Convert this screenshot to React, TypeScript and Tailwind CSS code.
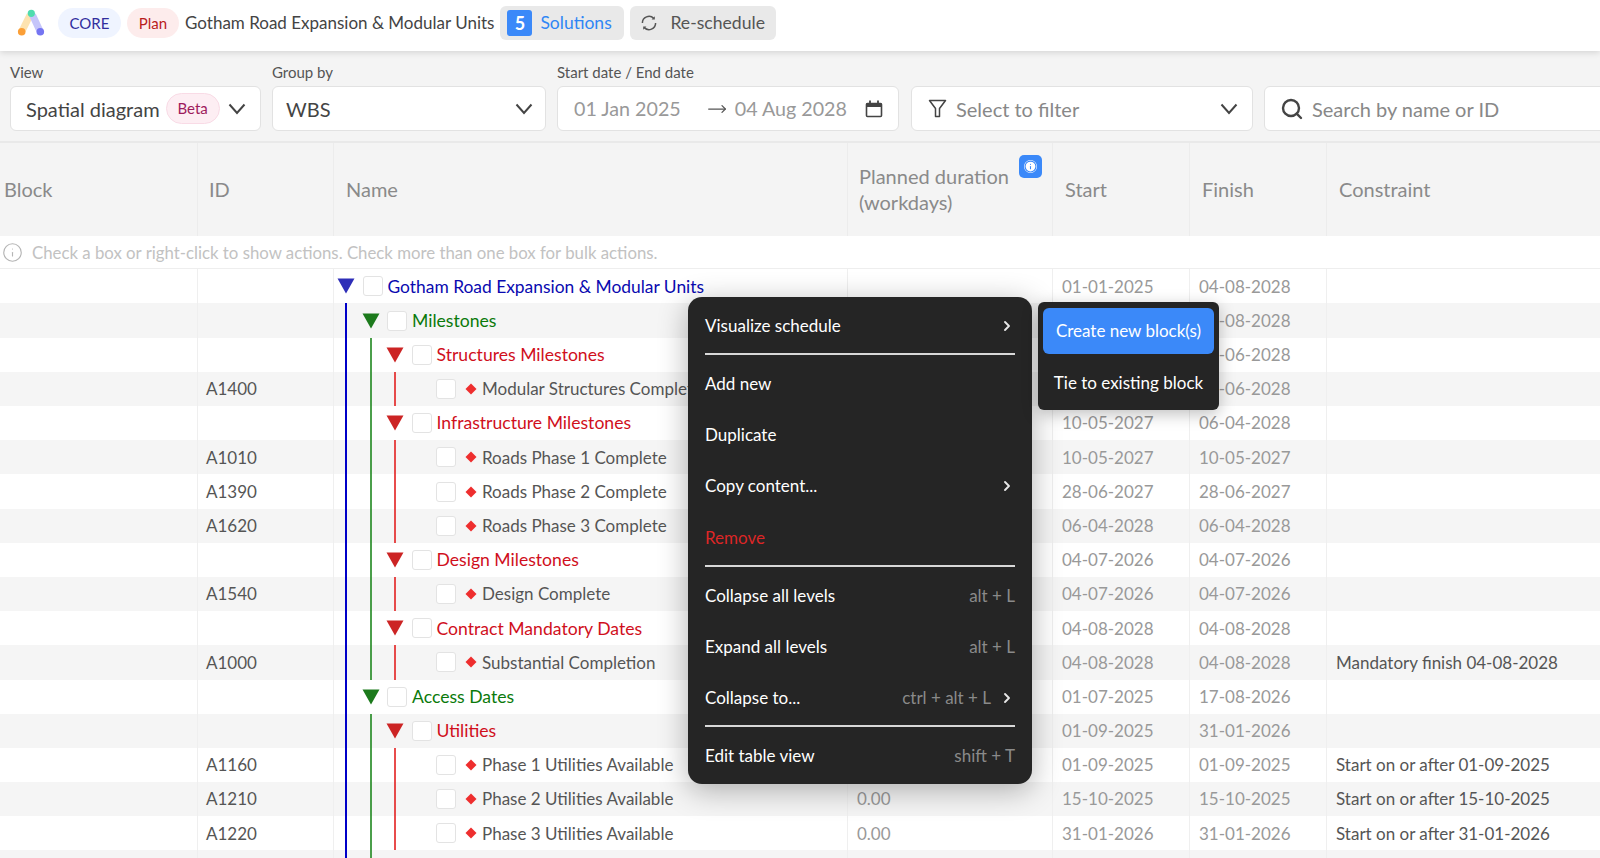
import { ChevronRight, Info, MoveRight, Search } from "lucide-react";

type Row = {
  level: number;
  name: string;
  id?: string;
  duration?: string;
  start?: string;
  finish?: string;
  constraint?: string;
};

const rows: Row[] = [
  { level: 0, name: "Gotham Road Expansion & Modular Units", start: "01-01-2025", finish: "04-08-2028" },
  { level: 1, name: "Milestones", finish: "04-08-2028" },
  { level: 2, name: "Structures Milestones", finish: "04-06-2028" },
  { level: 3, name: "Modular Structures Complete", id: "A1400", finish: "04-06-2028" },
  { level: 2, name: "Infrastructure Milestones", start: "10-05-2027", finish: "06-04-2028" },
  { level: 3, name: "Roads Phase 1 Complete", id: "A1010", start: "10-05-2027", finish: "10-05-2027" },
  { level: 3, name: "Roads Phase 2 Complete", id: "A1390", start: "28-06-2027", finish: "28-06-2027" },
  { level: 3, name: "Roads Phase 3 Complete", id: "A1620", start: "06-04-2028", finish: "06-04-2028" },
  { level: 2, name: "Design Milestones", start: "04-07-2026", finish: "04-07-2026" },
  { level: 3, name: "Design Complete", id: "A1540", start: "04-07-2026", finish: "04-07-2026" },
  { level: 2, name: "Contract Mandatory Dates", start: "04-08-2028", finish: "04-08-2028" },
  { level: 3, name: "Substantial Completion", id: "A1000", start: "04-08-2028", finish: "04-08-2028", constraint: "Mandatory finish 04-08-2028" },
  { level: 1, name: "Access Dates", start: "01-07-2025", finish: "17-08-2026" },
  { level: 2, name: "Utilities", start: "01-09-2025", finish: "31-01-2026" },
  { level: 3, name: "Phase 1 Utilities Available", id: "A1160", start: "01-09-2025", finish: "01-09-2025", constraint: "Start on or after 01-09-2025" },
  { level: 3, name: "Phase 2 Utilities Available", id: "A1210", duration: "0.00", start: "15-10-2025", finish: "15-10-2025", constraint: "Start on or after 15-10-2025" },
  { level: 3, name: "Phase 3 Utilities Available", id: "A1220", duration: "0.00", start: "31-01-2026", finish: "31-01-2026", constraint: "Start on or after 31-01-2026" },
  { level: 2, name: "" },
];

const guideColors = ["bg-[#0000c8]", "bg-[#0f7f0f]/75", "bg-[#e01010]/75"];
const triangleColors = ["text-[#2e2eb8]", "text-[#1c7a1c]", "text-[#cc2424]"];
const nameColors = [
  "text-[#0a0ab0] text-[17.4px] pt-px",
  "text-[#0b7a0b] text-[17.6px] pt-px",
  "text-[#d00f1c] text-[17.6px] pt-px",
  "text-[#555555]",
];

function Checkbox() {
  return <div className="w-5 h-5 shrink-0 ml-1 bg-white border border-[#e3e3e3] rounded-[3px]"></div>;
}

function Chevron({ className }: { className: string }) {
  return (
    <svg width="18" height="12" viewBox="0 0 18 12" fill="none" className={`shrink-0 ${className}`}>
      <path d="M1.5 1.5L9 10L16.5 1.5" stroke="#444444" strokeWidth="2" />
    </svg>
  );
}

function TreeRow({ row }: { row: Row }) {
  const guides = row.level;
  return (
    <div className="flex items-center h-full">
      {guideColors.slice(0, guides).map((color) => (
        <div key={color} className="w-[24.5px] shrink-0 self-stretch flex justify-center">
          <div className={`w-0.5 h-full ${color}`}></div>
        </div>
      ))}
      {row.level < 3 ? (
        <div className="w-[24.5px] shrink-0 flex justify-center">
          <svg width="18" height="16" viewBox="0 0 18 16" className={triangleColors[row.level]}>
            <path d="M0.5 0.5H17.5L9 15.5Z" fill="currentColor" />
          </svg>
        </div>
      ) : (
        <div className="w-[24.5px] shrink-0"></div>
      )}
      <Checkbox />
      {row.level === 3 && (
        <svg width="12" height="12" viewBox="0 0 12 12" className="ml-[9px] shrink-0">
          <path d="M6 0.5L11.5 6L6 11.5L0.5 6Z" fill="#ee2e2e" />
        </svg>
      )}
      <span className={`ml-[5px] whitespace-nowrap ${nameColors[row.level]}`}>{row.name}</span>
    </div>
  );
}

function MenuItem({
  label,
  hint,
  arrow,
  danger,
}: {
  label: string;
  hint?: string;
  arrow?: boolean;
  danger?: boolean;
}) {
  return (
    <div className="h-[51.3px] flex items-center justify-between">
      <span className={danger ? "text-[#dc2626]" : "text-white"}>{label}</span>
      <div className="flex items-center gap-[8px]">
        {hint && <span className="text-[#8a8a8a]">{hint}</span>}
        {arrow && <ChevronRight size={16} strokeWidth={2.8} className="text-[#e8e8e8]" />}
      </div>
    </div>
  );
}

function MenuLine() {
  return <div className="h-0.5 mt-[1.6px] mb-[3px] bg-[#d8d8d8]"></div>;
}

function Control({ label, className, children }: { label: string; className: string; children: React.ReactNode }) {
  return (
    <div className={`shrink-0 flex flex-col ${className}`}>
      <div className="h-[35px] pt-2 flex items-center text-[15px] text-[#555555] whitespace-pre">{label}</div>
      <div className="h-[45px] flex items-center bg-white border border-[#e2e2e2] rounded-md text-[20px]">{children}</div>
    </div>
  );
}

export default function App() {
  return (
    <div
      className="relative w-[1600px] h-[858px] overflow-hidden bg-white text-[17px] text-[#555555]"
      style={{ fontFamily: "Lato, 'Liberation Sans', sans-serif" }}
    >
      {/* top bar */}
      <div className="relative z-10 h-[51px] pb-[5px] flex items-center bg-white shadow-[0_2px_6px_rgba(0,0,0,0.12)]">
        <svg width="28" height="30" viewBox="0 0 28 30" className="ml-[17px] shrink-0">
          <path d="M13 7L4.7 23.7" stroke="#fde3b0" strokeWidth="7" />
          <path d="M15.5 7L23.3 23.7" stroke="#c5c5fa" strokeWidth="7" />
          <circle cx="14.3" cy="5.3" r="3.6" fill="#4fdcae" />
          <circle cx="4.7" cy="23.7" r="3.8" fill="#fb9f37" />
          <circle cx="23.3" cy="23.7" r="3.8" fill="#7575f2" />
        </svg>
        <div className="ml-[13px] w-[63px] h-[30px] flex items-center justify-center rounded-full bg-[#eff4ff] text-[15px] text-[#312e9e]">
          CORE
        </div>
        <div className="ml-[6px] w-[52px] h-[30px] flex items-center justify-center rounded-full bg-[#fdecec] text-[15px] text-[#b91c1c]">
          Plan
        </div>
        <span className="ml-[6px] text-[17px] text-[#444444] whitespace-nowrap">Gotham Road Expansion &amp; Modular Units</span>
        <div className="ml-[6px] h-[34px] w-[124px] flex items-center bg-[#e9e9e9] rounded-md">
          <div className="ml-[7px] w-[25px] h-[26px] flex items-center justify-center rounded-[3px] bg-[#3b89f9] text-[18px] font-bold text-white">
            5
          </div>
          <span className="ml-2 text-[17.5px] text-[#2f86f5]">Solutions</span>
        </div>
        <div className="ml-[6px] h-[34px] w-[146px] flex items-center bg-[#e9e9e9] rounded-md">
          <svg width="18" height="18" viewBox="0 0 18 18" fill="none" className="ml-[10px] shrink-0">
            <path d="M2.4 9a6.6 6.6 0 0 1 11.3-4.6" stroke="#555555" strokeWidth="1.5" />
            <path d="M15.6 9a6.6 6.6 0 0 1-11.3 4.6" stroke="#555555" strokeWidth="1.5" />
            <path d="M14.8 2.2V5.6H11.6Z" fill="#555555" />
            <path d="M3.2 15.8V12.4H6.4Z" fill="#555555" />
          </svg>
          <span className="ml-3 text-[17.6px] text-[#555555]">Re-schedule</span>
        </div>
      </div>

      {/* filters */}
      <div className="h-[92px] flex gap-[11px] pl-[10px] bg-[#f4f4f4] border-b-2 border-[#e9e9e9]">
        <Control label="View" className="w-[251px]">
          <span className="ml-[15px] text-[#444444]">Spatial diagram</span>
          <span className="ml-[6px] w-[54px] h-[31px] flex items-center justify-center rounded-full bg-[#fdeef3] border border-[#f9dbe6] text-[15px] text-[#9d1c5c]">
            Beta
          </span>
          <Chevron className="ml-[8px]" />
        </Control>
        <Control label="Group by" className="w-[274px]">
          <span className="ml-[13px] text-[#444444]">WBS</span>
          <Chevron className="ml-auto mr-[12px]" />
        </Control>
        <Control label="Start date / End date" className="w-[342px]">
          <span className="ml-4 text-[19.7px] text-[#999999] whitespace-nowrap">01 Jan 2025</span>
          <MoveRight size={20} strokeWidth={1.5} className="ml-[26px] text-[#555555]" />
          <span className="ml-2 text-[19.7px] text-[#999999] whitespace-nowrap">04 Aug 2028</span>
          <svg width="18" height="18" viewBox="0 0 18 18" fill="none" className="ml-auto mr-[15px] shrink-0">
            <rect x="1.5" y="3.5" width="15" height="13" rx="1" stroke="#444444" strokeWidth="1.6" />
            <path d="M1.5 3H16.5V7H1.5Z" fill="#444444" />
            <path d="M5 0.5V4M13 0.5V4" stroke="#444444" strokeWidth="1.8" />
          </svg>
        </Control>
        <Control label="" className="w-[342px] ml-px">
          <svg width="19" height="19" viewBox="0 0 19 19" fill="none" className="ml-4 shrink-0">
            <path d="M1.5 1.5H17.5L11.5 9.5V17.5H7.5V9.5Z" stroke="#444444" strokeWidth="1.5" strokeLinejoin="round" />
          </svg>
          <span className="ml-[9px] text-[#888888]">Select to filter</span>
          <Chevron className="ml-auto mr-[14px]" />
        </Control>
        <Control label="" className="w-[400px]">
          <Search size={24} strokeWidth={2.4} className="ml-[15px] text-[#444444]" />
          <span className="ml-2 text-[#888888]">Search by name or ID</span>
        </Control>
      </div>

      {/* table header */}
      <div className="h-[93px] grid grid-cols-[198px_136px_514px_205px_137px_137px_273px] bg-[#f4f4f4] text-[20px] text-[#8a8a8a]">
        <div className="flex items-center pl-[4px] pb-[2px] border-r border-[#ececec]">Block</div>
        <div className="flex items-center pl-[11px] pb-[2px] border-r border-[#ececec]">ID</div>
        <div className="flex items-center pl-[12px] pb-[2px] border-r border-[#ececec]">Name</div>
        <div className="relative flex items-center pl-[11px] pb-[2px] leading-[26px] border-r border-[#ececec]">
          <div>
            Planned duration
            <br />
            (workdays)
          </div>
          <div className="absolute top-[12px] right-[10px] w-[23px] h-[23px] flex items-center justify-center rounded-[5px] bg-[#3b89f9]">
            <div className="w-[13px] h-[13px] flex items-center justify-center rounded-full bg-white">
              <Info size={13} strokeWidth={2} className="text-[#3b89f9]" />
            </div>
          </div>
        </div>
        <div className="flex items-center pl-[12px] pb-[2px] border-r border-[#ececec]">Start</div>
        <div className="flex items-center pl-[12px] pb-[2px] border-r border-[#ececec]">Finish</div>
        <div className="flex items-center pl-[12px] pb-[2px]">Constraint</div>
      </div>

      {/* hint */}
      <div className="h-[33.3px] flex items-center bg-white border-b border-[#eeeeee] text-[16.8px] text-[#c2c2c2]">
        <Info size={21} strokeWidth={1.3} className="ml-[2px] text-[#b5b5b5]" />
        <span className="ml-[9px]">Check a box or right-click to show actions. Check more than one box for bulk actions.</span>
      </div>

      {/* rows */}
      {rows.map((row, index) => (
        <div
          key={index}
          className={`h-[34.2px] grid grid-cols-[198px_136px_514px_205px_137px_137px_273px] ${
            index % 2 === 1 ? "bg-[#f5f5f5]" : "bg-white"
          }`}
        >
          <div className="border-r border-[#efefef]"></div>
          <div className="flex items-center pl-[8px] border-r border-[#efefef] text-[#555555]">{row.id}</div>
          <div className="border-r border-[#efefef]">
            <TreeRow row={row} />
          </div>
          <div className="flex items-center pl-[9px] border-r border-[#efefef] text-[#999999]">{row.duration}</div>
          <div className="flex items-center pl-[9px] border-r border-[#efefef] text-[#999999]">{row.start}</div>
          <div className="flex items-center pl-[9px] border-r border-[#efefef] text-[#999999]">{row.finish}</div>
          <div className="flex items-center pl-[9px] text-[#555555] whitespace-nowrap">{row.constraint}</div>
        </div>
      ))}

      {/* context menu */}
      <div className="absolute z-20 left-[688px] top-[297px] w-[344px] h-[487px] px-[17px] pt-[3px] rounded-[14px] bg-[#252525] text-[17px] shadow-[0_6px_30px_rgba(0,0,0,0.3)]">
        <MenuItem label="Visualize schedule" arrow />
        <MenuLine />
        <MenuItem label="Add new" />
        <MenuItem label="Duplicate" />
        <MenuItem label="Copy content..." arrow />
        <MenuItem label="Remove" danger />
        <MenuLine />
        <MenuItem label="Collapse all levels" hint="alt + L" />
        <MenuItem label="Expand all levels" hint="alt + L" />
        <MenuItem label="Collapse to..." hint="ctrl + alt + L" arrow />
        <MenuLine />
        <MenuItem label="Edit table view" hint="shift + T" />
      </div>

      {/* submenu */}
      <div className="absolute z-20 left-[1038px] top-[302px] w-[181px] h-[108px] px-[5px] pt-[6px] rounded-md bg-[#252525] text-[17px] text-white shadow-[0_4px_16px_rgba(0,0,0,0.25)]">
        <div className="h-[46px] flex items-center justify-center rounded-md bg-[#3b89f9]">Create new block(s)</div>
        <div className="mt-1 h-[50px] flex items-center justify-center">Tie to existing block</div>
      </div>
    </div>
  );
}
